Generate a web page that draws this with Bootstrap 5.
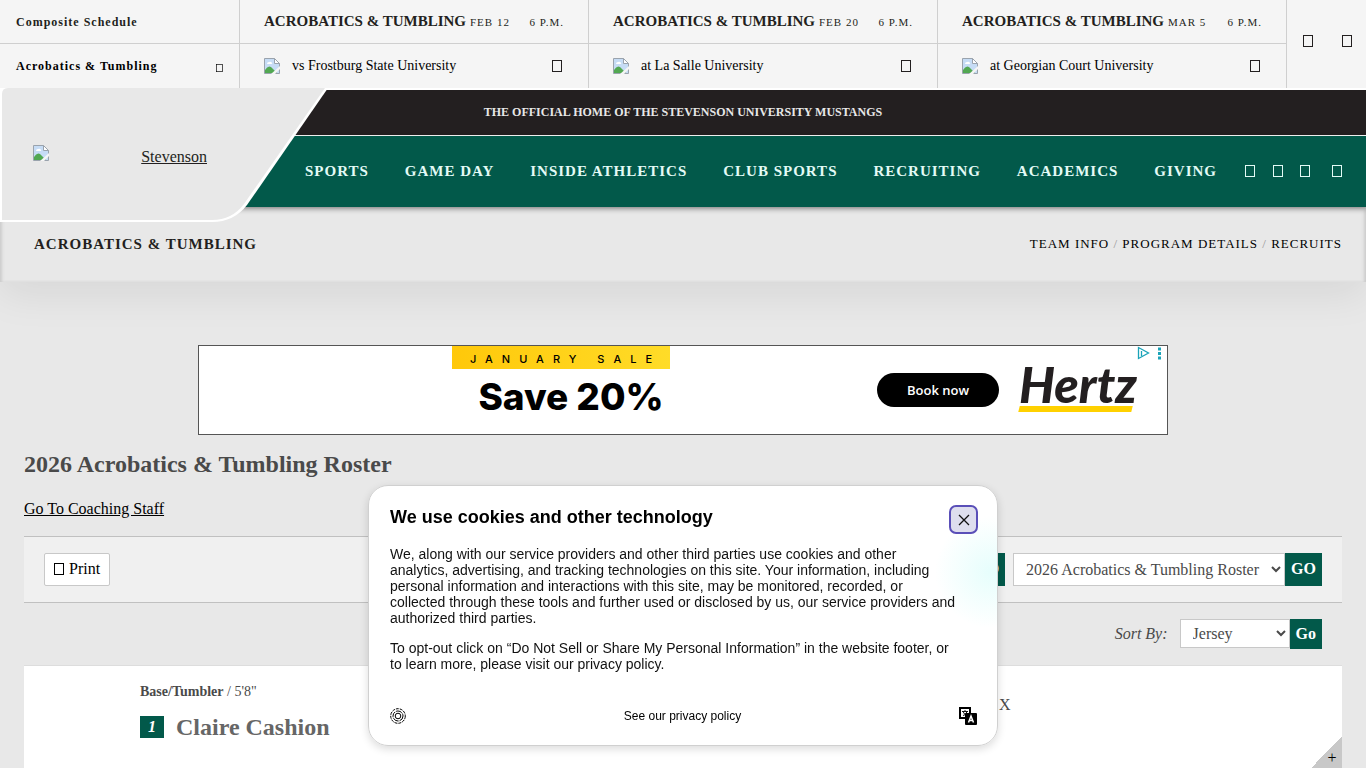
<!DOCTYPE html>
<html lang="en">
<head>
<meta charset="utf-8">
<meta name="viewport" content="width=device-width, initial-scale=1">
<title>2026 Acrobatics &amp; Tumbling Roster - Stevenson University Athletics</title>
<link href="https://cdn.jsdelivr.net/npm/bootstrap@5.3.0/dist/css/bootstrap.min.css" rel="stylesheet">
<style>
  :root { --green: #02594a; --ink: #231f20; --page: #e8e8e8; --line: #cfcfcf; }
  body { background: var(--page); color: #4a4a4a; font-family: "Liberation Serif", serif; font-size: 16px; line-height: 24px; }
  a { color: #000; }
  .glyph { width: 10px; height: 12px; flex: none; }
  .glyph-small { width: 7px; height: 8px; }
  .broken { width: 16px; height: 16px; flex: none; }

  .ticker { background: #f5f5f5; border-bottom: 2px solid #fff; color: var(--ink); }
  .ticker-cell { height: 44px; }
  .ticker-cell:first-child { border-bottom: 1px solid var(--line); }
  .ticker-filter { flex: 0 0 240px; border-right: 1px solid var(--line); font-size: 12px; font-weight: 700; letter-spacing: 1px; }
  .ticker-game { flex: 1 1 0; min-width: 0; border-right: 1px solid var(--line); white-space: nowrap; }
  .ticker-sport { font-size: 15px; line-height: 22px; font-weight: 700; padding-bottom: 2px; }
  .ticker-when { font-size: 11px; letter-spacing: 1px; }
  .ticker-team { font-size: 14px; color: #000; }
  .ticker-more { margin-left: auto; margin-right: 2px; }
  .ticker-nav { flex: 0 0 79px; padding: 0 14px 6px 16px; }
  .plain { background: none; border: 0; padding: 0; color: inherit; display: inline-flex; }

  .tagline { background: var(--ink); color: #e8e8e8; height: 46px; padding-bottom: 2px; border-bottom: 1px solid #fff; font-size: 12px; font-weight: 700; }
  .mainnav { background: var(--green); height: 71px; padding: 0 24px 2px 305px; box-shadow: 0 2px 5px rgba(0,0,0,.4); position: relative; z-index: 1; }
  .mainnav .nav-link { color: #e3fbf6; font-size: 15px; font-weight: 700; letter-spacing: 1px; padding: 0; white-space: nowrap; }
  .mainnav .glyph { color: #e3fbf6; }
  .social { width: 97px; }
  .brand { position: absolute; left: 0; top: -2px; z-index: 2; }
  .brand-link { position: absolute; left: 33px; top: 57px; width: 182px; color: var(--ink); }
  .subnav { height: 75px; padding: 0 24px 2px 34px; box-shadow: inset 3px 0 3px -1px #ccc, inset -3px 0 3px -1px #ccc, 0 12px 40px rgba(0,0,0,.08); }
  .subnav-title { font-size: 15px; font-weight: 700; letter-spacing: 1px; color: var(--ink); }
  .subnav-links { font-size: 13px; letter-spacing: 1px; color: #999; }
  .subnav-links a { text-decoration: none; }

  .ad { width: 970px; max-width: 100%; height: 90px; margin-top: 63px; background: #fff; border: 1px solid #555; color: #000; }
  .ad-offer { width: 218px; margin-left: 253px; }
  .ad-flag { height: 23px; background: linear-gradient(90deg, #ffc80a, #ffdc28); font-family: Inter, sans-serif; font-size: 11px; line-height: 26px; font-weight: 500; letter-spacing: 9px; padding-left: 9px; white-space: nowrap; }
  .ad-save { font-family: Inter, sans-serif; font-weight: 800; font-size: 37px; line-height: 55px; padding-left: 20px; white-space: nowrap; }
  .ad-cta { width: 122px; height: 34px; border: 0; border-radius: 17px; background: #000; color: #fff; font-family: "Open Sans", sans-serif; font-size: 13px; font-weight: 600; }
  .ad-logo { width: 120px; color: var(--ink); font-family: Lato, sans-serif; font-weight: 900; font-style: italic; font-size: 50px; line-height: 32px; white-space: nowrap; }
  .ad-bar { height: 6px; width: 113px; margin-top: 6px; background: #ffd100; transform: skewX(-14deg); }
  .ad-choices { position: absolute; right: 4px; top: 0; }

  .page-title { font-size: 24px; line-height: 32px; font-weight: 700; color: #4a4a4a; margin: 13px 0 17px; }
  .toolbar { height: 67px; margin-top: 15px; padding: 0 20px; background: #f0f0f0; border-top: 1px solid #c0c0c0; border-bottom: 1px solid #c0c0c0; }
  .print-btn { height: 33px; padding: 0 9px 2px 9px; gap: 5px; background: #fff; border: 1px solid #c8c8c8; border-radius: 2px; color: #000; font-size: 16px; }
  .pick { height: 33px; border: 1px solid #c8c8c8; border-radius: 0; background: #fff; color: #4a4a4a; font-size: 16px; padding: 0 0 0 8px; }
  .go-btn { height: 33px; border: 0; border-radius: 0; background: var(--green); color: #fff; font-weight: 700; font-size: 16px; padding: 0 6px 2px; }
  .pick-year { width: 272px; }
  .pick-sort { width: 110px; height: 29px; }
  .go-sort { height: 30px; padding-bottom: 0; }
  .sorter { padding: 16px 20px; }
  .sorter label { line-height: 30px; }
  .player { background: #fff; border-top: 1px solid #ddd; padding: 14px 24px 0 116px; min-height: 103px; position: relative; }
  .player-pos { font-size: 14px; }
  .player-num { width: 24px; height: 22px; background: var(--green); color: #fff; font-weight: 700; font-style: italic; font-size: 16px; line-height: 22px; text-align: center; }
  .player-name { font-size: 24px; line-height: 30px; font-weight: 700; color: #666; text-decoration: none; }
  .player-year { position: absolute; left: 975px; top: 27px; }
  .player-more { position: absolute; right: 0; bottom: 0; width: 31px; height: 31px; background: linear-gradient(135deg, transparent 50%, #c8c8c8 50%); color: #000; border: 0; padding: 11px 0 0 11px; line-height: 20px; }

  .consent { position: fixed; left: 50%; bottom: 22px; width: 630px; margin-left: -315px; height: 261px; padding: 19px 19px 0 21px; background: radial-gradient(circle 56px at 622px 86px, #e6fefc, #fff 100%); border: 1px solid #d0d0d0; border-radius: 20px; box-shadow: 0 3px 8px rgba(0,0,0,.14); color: #000; font-family: "Liberation Sans", sans-serif; z-index: 10; }
  .consent-title { font-size: 18px; line-height: 24px; font-weight: 700; margin: 0; }
  .consent-body { font-size: 14px; line-height: 16px; max-width: 567px; margin-top: 12px; color: #111; }
  .consent-body p { margin-bottom: 14px; }
  .consent-close { width: 29px; height: 29px; border: 2px solid #5a4fb8; border-radius: 7px; background: #dedeee; padding: 0; display: flex; align-items: center; justify-content: center; }
  .consent-foot { font-size: 12px; line-height: 18px; margin-top: 35px; padding-right: 1px; }
  .consent-foot a { text-decoration: none; }
</style>
</head>
<body class="d-flex flex-column min-vh-100">
<svg width="0" height="0" class="position-absolute" aria-hidden="true">
  <symbol id="box" viewBox="0 0 10 12"><rect x=".5" y=".5" width="9" height="11" fill="none" stroke="currentColor"/></symbol>
  <symbol id="noimg" viewBox="0 0 16 16">
    <path d="M.5.5h10l5 5v10H.5z" fill="#c6dcf5" stroke="#9aa3ad"/>
    <path d="M1 15V12q3-5 6-3l6 6z" fill="#52a852"/>
    <path d="M3 6q0-2 2-2 2-1 3 1 1 1-1 1z" fill="#fff"/>
    <path d="M10.500.5v5h5z" fill="#fff" stroke="#9aa3ad"/>
    <path d="M7 16 16 8v3l-5 5z" fill="#f5f5f5"/>
  </symbol>
</svg>

<section class="ticker d-flex" aria-label="Scoreboard">
  <div class="ticker-filter">
    <div class="ticker-cell d-flex align-items-center px-3">Composite Schedule</div>
    <div class="ticker-cell d-flex align-items-center justify-content-between px-3 text-black">Acrobatics &amp; Tumbling
      <button class="plain pt-1" aria-label="Choose sport"><svg class="glyph glyph-small"><use href="#box"/></svg></button></div>
  </div>
  <div class="ticker-game">
    <div class="ticker-cell d-flex align-items-center px-4"><span class="ticker-sport">ACROBATICS &amp; TUMBLING</span><span class="ticker-when ms-1">FEB 12</span><span class="ticker-when ms-auto">6 P.M.</span></div>
    <div class="ticker-cell d-flex align-items-center px-4"><svg class="broken"><use href="#noimg"/></svg><span class="ticker-team ms-2 ps-1">vs Frostburg State University</span><button class="plain ticker-more" aria-label="More"><svg class="glyph"><use href="#box"/></svg></button></div>
  </div>
  <div class="ticker-game">
    <div class="ticker-cell d-flex align-items-center px-4"><span class="ticker-sport">ACROBATICS &amp; TUMBLING</span><span class="ticker-when ms-1">FEB 20</span><span class="ticker-when ms-auto">6 P.M.</span></div>
    <div class="ticker-cell d-flex align-items-center px-4"><svg class="broken"><use href="#noimg"/></svg><span class="ticker-team ms-2 ps-1">at La Salle University</span><button class="plain ticker-more" aria-label="More"><svg class="glyph"><use href="#box"/></svg></button></div>
  </div>
  <div class="ticker-game">
    <div class="ticker-cell d-flex align-items-center px-4"><span class="ticker-sport">ACROBATICS &amp; TUMBLING</span><span class="ticker-when ms-1">MAR 5</span><span class="ticker-when ms-auto">6 P.M.</span></div>
    <div class="ticker-cell d-flex align-items-center px-4"><svg class="broken"><use href="#noimg"/></svg><span class="ticker-team ms-2 ps-1">at Georgian Court University</span><button class="plain ticker-more" aria-label="More"><svg class="glyph"><use href="#box"/></svg></button></div>
  </div>
  <div class="ticker-nav d-flex align-items-center justify-content-between">
    <button class="plain" aria-label="Previous"><svg class="glyph"><use href="#box"/></svg></button>
    <button class="plain" aria-label="Next"><svg class="glyph"><use href="#box"/></svg></button>
  </div>
</section>

<header class="position-relative">
  <div class="tagline d-flex align-items-center justify-content-center">THE OFFICIAL HOME OF THE STEVENSON UNIVERSITY MUSTANGS</div>
  <nav class="mainnav d-flex align-items-center" aria-label="Main">
    <div class="nav d-flex flex-nowrap justify-content-between flex-grow-1 pe-1">
      <a class="nav-link" href="#">SPORTS</a><a class="nav-link" href="#">GAME DAY</a><a class="nav-link" href="#">INSIDE ATHLETICS</a><a class="nav-link" href="#">CLUB SPORTS</a><a class="nav-link" href="#">RECRUITING</a><a class="nav-link" href="#">ACADEMICS</a><a class="nav-link" href="#">GIVING</a>
    </div>
    <div class="social d-flex justify-content-between ms-4">
      <a class="d-flex" href="#" aria-label="Facebook"><svg class="glyph"><use href="#box"/></svg></a>
      <a class="d-flex" href="#" aria-label="Twitter"><svg class="glyph"><use href="#box"/></svg></a>
      <a class="d-flex" href="#" aria-label="Instagram"><svg class="glyph"><use href="#box"/></svg></a>
      <a class="d-flex ms-1" href="#" aria-label="Search"><svg class="glyph"><use href="#box"/></svg></a>
    </div>
  </nav>
  <div class="brand">
    <svg width="330" height="136" class="d-block" aria-hidden="true">
      <path d="M0 0H328L247 117Q234 134 212 134H0z" fill="#fff"/>
      <path d="M2 6Q2 0 8 0H325L244 116Q232 132 212 132H2z" fill="#e8e8e8"/>
    </svg>
    <a class="brand-link d-flex justify-content-between" href="#"><svg class="broken"><use href="#noimg"/></svg><span class="me-2">Stevenson</span></a>
  </div>
  <div class="subnav d-flex align-items-center justify-content-between">
    <div class="subnav-title">ACROBATICS &amp; TUMBLING</div>
    <nav class="subnav-links" aria-label="Team"><a href="#">TEAM INFO</a> / <a href="#">PROGRAM DETAILS</a> / <a href="#">RECRUITS</a></nav>
  </div>
</header>

<main class="px-4 flex-grow-1 d-flex flex-column">
  <aside class="ad mx-auto d-flex position-relative" aria-label="Advertisement">
    <div class="ad-offer text-center">
      <div class="ad-flag">JANUARY SALE</div>
      <div class="ad-save">Save 20%</div>
    </div>
    <div class="d-flex align-items-center ms-auto me-4 pe-1 gap-3">
      <button class="ad-cta">Book now</button>
      <div class="ms-1"><div class="ad-logo">Hertz</div><div class="ad-bar"></div></div>
    </div>
    <svg class="ad-choices" width="28" height="14" fill="none" stroke="#1aa3b8"><path d="M3.500 1.500v11l10-5.500z M6.500 5v5" stroke-width="1.300"/><path d="M24.500 1.500v3M24.500 6v3M24.500 10.500v3" stroke-width="3"/></svg>
  </aside>

  <h1 class="page-title">2026 Acrobatics &amp; Tumbling Roster</h1>
  <a href="#coaches" class="align-self-start">Go To Coaching Staff</a>

  <div class="toolbar d-flex align-items-center justify-content-between">
    <button class="print-btn d-flex align-items-center"><svg class="glyph"><use href="#box"/></svg>Print</button>
    <div class="d-flex">
      <button class="go-btn me-2">GO</button>
      <select class="pick pick-year" aria-label="Roster season"><option>2026 Acrobatics &amp; Tumbling Roster</option></select>
      <button class="go-btn">GO</button>
    </div>
  </div>

  <div class="sorter d-flex align-items-start justify-content-end">
    <label class="fst-italic me-2 pe-1" for="sort">Sort By:</label>
    <select class="pick pick-sort" id="sort"><option>Jersey</option></select>
    <button class="go-btn go-sort">Go</button>
  </div>

  <article class="player flex-grow-1">
    <div class="player-pos"><b>Base/Tumbler</b> / 5'8"</div>
    <div class="d-flex align-items-center gap-2 pt-1 mt-1"><span class="player-num me-1">1</span><a class="player-name" href="#">Claire Cashion</a></div>
    <span class="player-year">X</span>
    <button class="player-more" aria-label="Show more">+</button>
  </article>
</main>

<div class="consent" role="dialog" aria-labelledby="consent-title">
  <div class="d-flex justify-content-between align-items-start">
    <h2 class="consent-title" id="consent-title">We use cookies and other technology</h2>
    <button class="consent-close" aria-label="Close"><svg width="12" height="12" stroke="#111" stroke-width="1.300"><path d="M1 1 11 11M11 1 1 11"/></svg></button>
  </div>
  <div class="consent-body">
    <p>We, along with our service providers and other third parties use cookies and other analytics, advertising, and tracking technologies on this site. Your information, including personal information and interactions with this site, may be monitored, recorded, or collected through these tools and further used or disclosed by us, our service providers and authorized third parties.</p>
    <p>To opt-out click on “Do Not Sell or Share My Personal Information” in the website footer, or to learn more, please visit our privacy policy.</p>
  </div>
  <div class="consent-foot d-flex align-items-center justify-content-between">
    <button class="plain" aria-label="Cookie settings"><svg width="16" height="16" fill="none" stroke="#000"><circle cx="8" cy="8" r="7.300" stroke-dasharray="3 1"/><circle cx="8" cy="8" r="5" stroke-dasharray="6 1"/><circle cx="8" cy="8" r="2.800"/></svg></button>
    <a href="#">See our privacy policy</a>
    <button class="plain" aria-label="Language"><svg width="18" height="18" fill="none"><rect x="1" y="1" width="10" height="10" stroke="#000" stroke-width="2"/><path d="M3 4.500h6M6 3v1.500M4 8.500q3 0 4-4M4 4.500q1 3 4 4" stroke="#000" stroke-width=".9"/><rect x="6" y="6" width="12" height="12" rx="1" fill="#000"/><path d="M9.500 15.500 12 9l2.500 6.500M10.500 13.500h3" stroke="#fff" stroke-width="1.500"/></svg></button>
  </div>
</div>
<script src="https://cdn.jsdelivr.net/npm/bootstrap@5.3.0/dist/js/bootstrap.bundle.min.js"></script>
</body>
</html>
